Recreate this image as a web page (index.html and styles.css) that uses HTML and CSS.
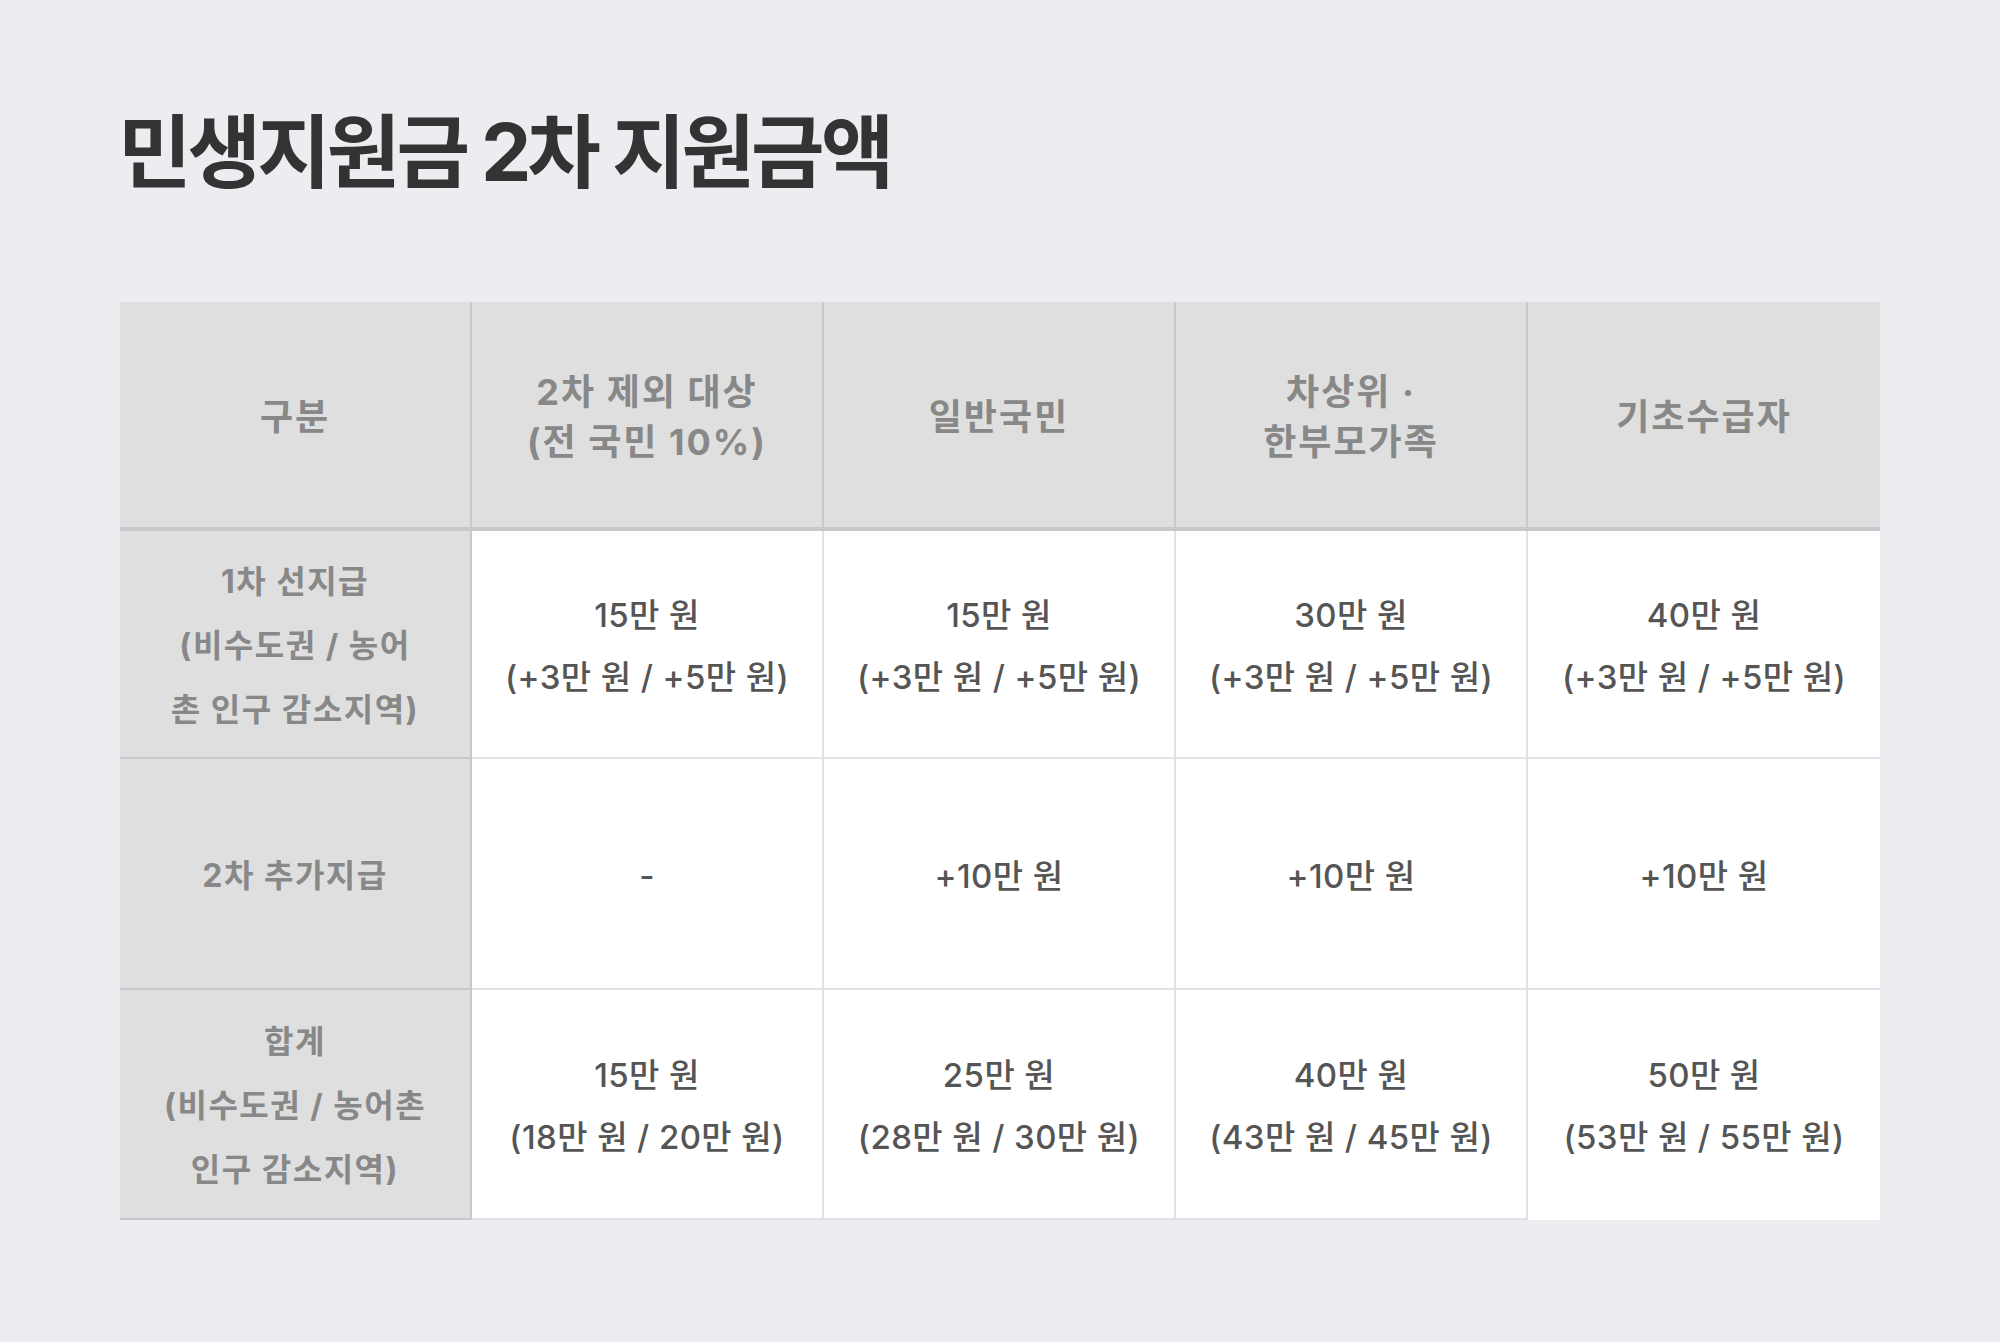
FILE: index.html
```html
<!DOCTYPE html>
<html lang="ko">
<head>
<meta charset="utf-8">
<title>민생지원금 2차 지원금액</title>
<link rel="stylesheet" href="styles.css">
</head>
<body>
<main class="page">
  <h1 class="title">민생지원금 2차 지원금액</h1>
  <div class="table">
    <div class="cell head">구분</div>
    <div class="cell head">2차 제외 대상<br>(전 국민 10%)</div>
    <div class="cell head">일반국민</div>
    <div class="cell head">차상위 ·<br>한부모가족</div>
    <div class="cell head last-col">기초수급자</div>

    <div class="cell side">1차 선지급<br>(비수도권 / 농어<br>촌 인구 감소지역)</div>
    <div class="cell body">15만 원<br>(+3만 원 / +5만 원)</div>
    <div class="cell body">15만 원<br>(+3만 원 / +5만 원)</div>
    <div class="cell body">30만 원<br>(+3만 원 / +5만 원)</div>
    <div class="cell body last-col">40만 원<br>(+3만 원 / +5만 원)</div>

    <div class="cell side">2차 추가지급</div>
    <div class="cell body">-</div>
    <div class="cell body">+10만 원</div>
    <div class="cell body">+10만 원</div>
    <div class="cell body last-col">+10만 원</div>

    <div class="cell side">합계<br>(비수도권 / 농어촌<br>인구 감소지역)</div>
    <div class="cell body">15만 원<br>(18만 원 / 20만 원)</div>
    <div class="cell body">25만 원<br>(28만 원 / 30만 원)</div>
    <div class="cell body">40만 원<br>(43만 원 / 45만 원)</div>
    <div class="cell body last-col last-cell">50만 원<br>(53만 원 / 55만 원)</div>
  </div>
</main>
</body>
</html>
```

FILE: styles.css
```css
html, body {
  margin: 0;
  padding: 0;
}

body {
  background: #ededf1;
  font-family: "Inter", "Noto Sans CJK KR", sans-serif;
  width: 2000px;
  height: 1342px;
  overflow: hidden;
}

.page {
  padding: 112px 120px 0 120px;
}

.title {
  margin: 0 0 0 -2px;
  font-size: 80px;
  line-height: 80px;
  font-weight: 700;
  color: #333333;
  letter-spacing: -4px;
  height: 80px;
}

.table {
  margin-top: 110px;
  width: 1760px;
  display: grid;
  grid-template-columns: repeat(5, 352px);
  grid-template-rows: 229px 228px 231px 230px;
}

.cell {
  box-sizing: border-box;
  display: flex;
  align-items: center;
  justify-content: center;
  text-align: center;
  border-right: 2px solid #e2e2e4;
  border-bottom: 2px solid #e2e2e4;
}

.cell.last-col {
  border-right: none;
}

.head {
  background: #dfdfdf;
  color: #888888;
  font-size: 36px;
  letter-spacing: 2px;
  font-weight: 700;
  line-height: 50px;
  padding-top: 4px;
  border-right-color: #c8c8cc;
  border-bottom: 4px solid #c8c8cc;
}

.side {
  background: #dfdfdf;
  color: #888888;
  font-size: 32px;
  letter-spacing: 1.5px;
  font-weight: 700;
  line-height: 64px;
  padding-top: 4px;
  border-right-color: #c8c8cc;
  border-bottom-color: #c8c8cc;
}

.body {
  background: #ffffff;
  color: #555555;
  font-size: 33px;
  letter-spacing: 0.4px;
  font-weight: 500;
  line-height: 62px;
  padding-top: 4px;
}

.last-cell {
  border-bottom-color: transparent;
}
```
